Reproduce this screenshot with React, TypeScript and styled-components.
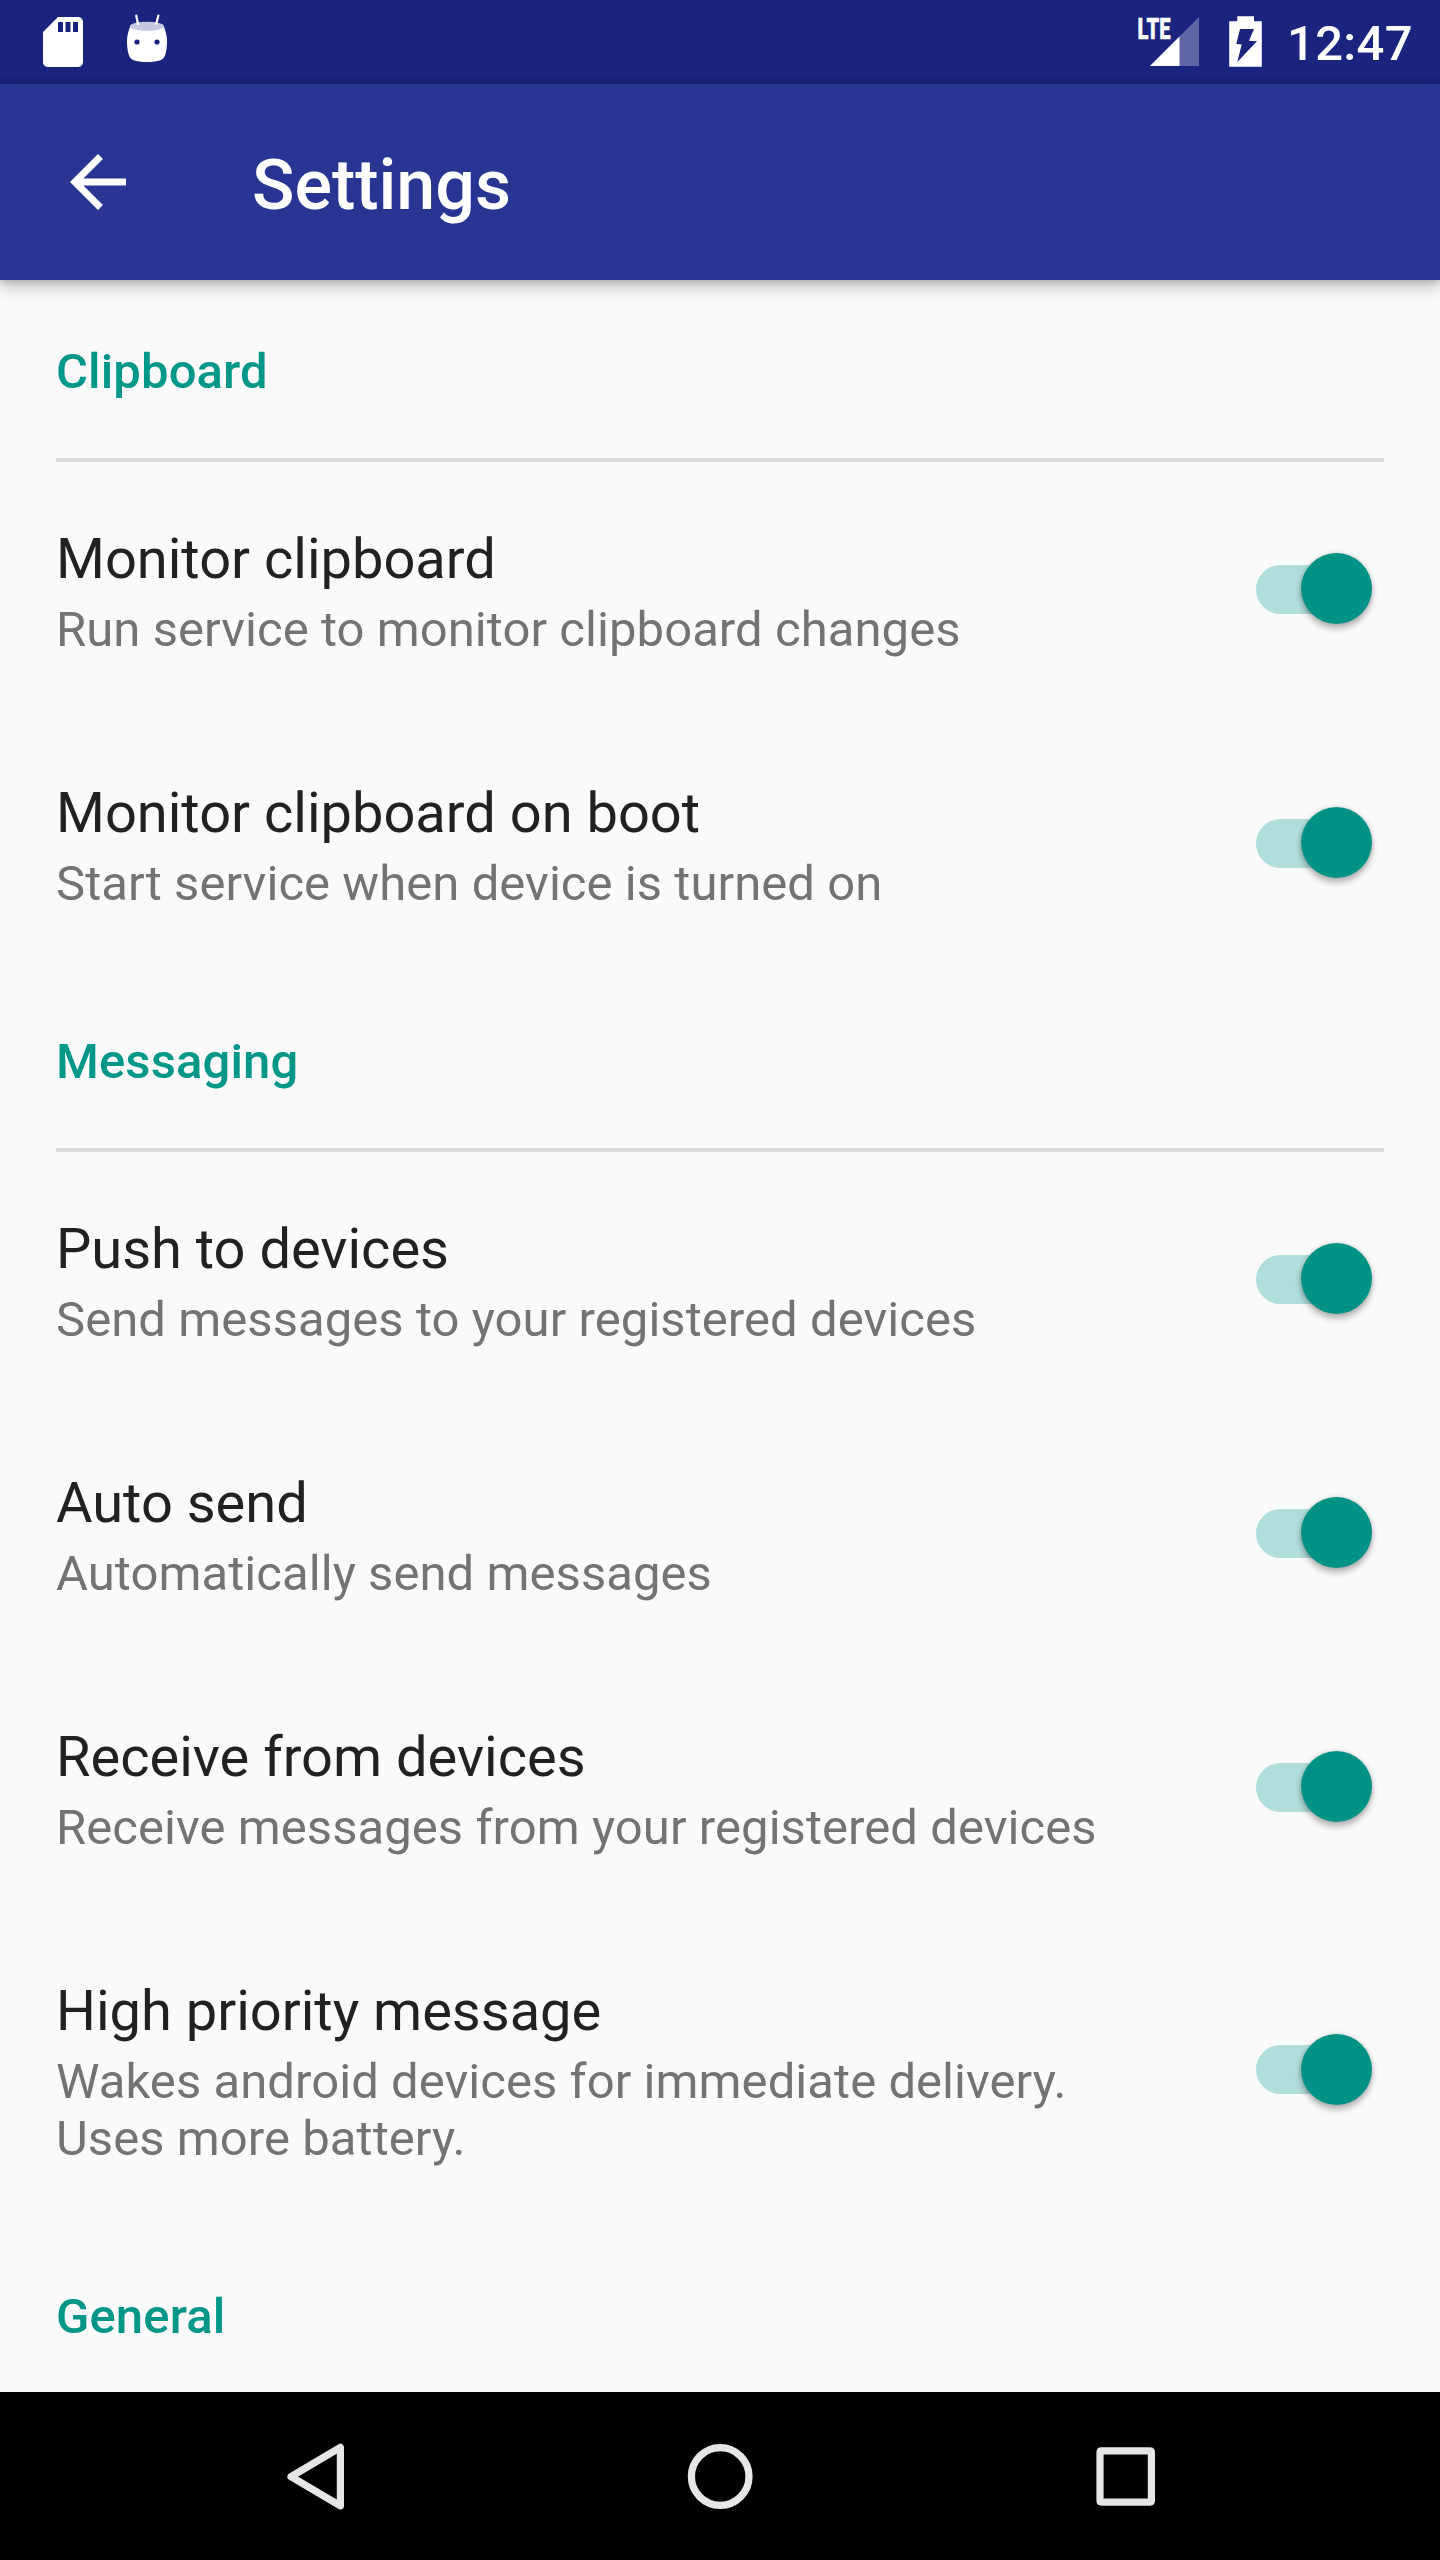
import React from "react";
import styled, { createGlobalStyle } from "styled-components";

const GlobalStyle = createGlobalStyle`
  *, *::before, *::after { box-sizing: border-box; }
  html, body { margin: 0; padding: 0; background: #fafafa; }
  body { font-family: Roboto, "Noto Sans", sans-serif; -webkit-font-smoothing: antialiased; }
`;

const Screen = styled.div`
  width: 1440px;
  height: 2560px;
  display: flex;
  flex-direction: column;
  overflow: hidden;
  background: #fafafa;
`;

const StatusBar = styled.div`
  flex: none;
  height: 84px;
  display: flex;
  justify-content: space-between;
  background: #1a237e;
`;

const StatusGroup = styled.div`
  display: flex;
  height: 84px;
`;

const StatusIcon = styled.svg`
  display: block;
  flex: none;
`;

const Clock = styled.div`
  width: 157px;
  padding: 15px 0 0 4px;
  line-height: 57px;
  font-size: 49px;
  font-weight: 500;
  letter-spacing: 0.3px;
  color: #fff;
  white-space: nowrap;
`;

const Toolbar = styled.header`
  flex: none;
  position: relative;
  z-index: 1;
  height: 196px;
  display: flex;
  align-items: center;
  padding-left: 56px;
  background: #283593;
  box-shadow: 0 0 7px rgba(0, 0, 0, 0.2), 0 7px 14px rgba(0, 0, 0, 0.24);
`;

const BackButton = styled.button`
  width: 84px;
  height: 84px;
  margin: 0 112px 0 0;
  padding: 0;
  border: 0;
  background: none;
  svg { display: block; }
`;

const Title = styled.h1`
  margin: 6px 0 0;
  font-size: 70px;
  line-height: 82px;
  font-weight: 500;
  color: #fff;
`;

const Content = styled.main`
  flex: 1;
  min-height: 0;
  overflow: hidden;
`;

const SectionHeader = styled.h2`
  margin: 0 56px;
  padding: 63px 0 58px;
  border-bottom: 4px solid #dbdbdb;
  font-size: 49px;
  line-height: 57px;
  font-weight: 500;
  letter-spacing: 0.12px;
  color: #009688;
`;

const Row = styled.div`
  display: flex;
  align-items: center;
  justify-content: space-between;
  padding: 64px 68px 58px 56px;
`;

const RowText = styled.div`
  display: flex;
  flex-direction: column;
  gap: 9px;
`;

const RowTitle = styled.div`
  font-size: 56px;
  line-height: 66px;
  color: #212121;
  white-space: nowrap;
`;

const RowSummary = styled.div`
  font-size: 49px;
  line-height: 57px;
  letter-spacing: 0.06px;
  color: #737373;
  white-space: pre-line;
`;

const Track = styled.div`
  width: 116px;
  height: 49px;
  margin-top: -6px;
  display: flex;
  align-items: center;
  justify-content: flex-end;
  border-radius: 25px;
  background: linear-gradient(to right, #b0deda 80px, transparent 80px);
`;

const Thumb = styled.div`
  flex: none;
  width: 71px;
  height: 71px;
  margin-bottom: 1px;
  border-radius: 50%;
  background: #009385;
  box-shadow: 0 0 5px rgba(0, 0, 0, 0.16), 0 5px 6px rgba(0, 0, 0, 0.25);
`;

const NavBar = styled.nav`
  flex: none;
  height: 168px;
  display: flex;
  justify-content: center;
  background: #000;
`;

const NavButton = styled.button`
  width: 405px;
  height: 168px;
  display: flex;
  align-items: center;
  justify-content: center;
  padding: 0;
  border: 0;
  background: none;
`;

const sections = [
  {
    name: "Clipboard",
    items: [
      ["Monitor clipboard", "Run service to monitor clipboard changes"],
      ["Monitor clipboard on boot", "Start service when device is turned on"],
    ],
  },
  {
    name: "Messaging",
    items: [
      ["Push to devices", "Send messages to your registered devices"],
      ["Auto send", "Automatically send messages"],
      ["Receive from devices", "Receive messages from your registered devices"],
      ["High priority message", "Wakes android devices for immediate delivery.\nUses more battery."],
    ],
  },
  { name: "General", items: [] },
];

export default function App() {
  return (
    <Screen>
      <GlobalStyle />
      <StatusBar>
        <StatusGroup>
          <StatusIcon width="105" height="84" viewBox="0 0 105 84">
            <path
              transform="translate(33 12) scale(2.5)"
              fill="#fff"
              d="M18 2h-8L4.02 8 4 20c0 1.1.9 2 2 2h12c1.1 0 2-.9 2-2V4c0-1.1-.9-2-2-2zm-6 6h-2V4h2v4zm3 0h-2V4h2v4zm3 0h-2V4h2v4z"
            />
          </StatusIcon>
          <StatusIcon width="84" height="84" viewBox="105 0 84 84">
            <path
              fill="#fff"
              d="M130 27C127.6 33 127 37 127 42C127 48 128 54 130 57.5C132 60.5 138 62 147 62C156 62 162 60.5 164 57.5C166 54 167 48 167 42C167 37 166.4 33 164 27Z"
            />
            <ellipse cx="147" cy="26.3" rx="17" ry="4.6" fill="#c6c8df" />
            <path d="M136.2 15.5L138 24M158.4 15.5L156.2 24" stroke="#fff" strokeWidth="2.2" strokeLinecap="round" />
            <circle cx="137" cy="42" r="2.6" fill="#1a237e" />
            <circle cx="157" cy="42" r="2.6" fill="#1a237e" />
          </StatusIcon>
        </StatusGroup>
        <StatusGroup>
          <StatusIcon width="77" height="84" viewBox="1130 0 77 84">
            <path d="M1150 66L1199 17V66Z" fill="#fff" fillOpacity="0.3" />
            <path d="M1150 66L1179.5 36.5V66Z" fill="#fff" />
            <text
              x="1137.5"
              y="39"
              fill="#fff"
              stroke="#fff"
              strokeWidth="0.4"
              fontFamily="Roboto, sans-serif"
              fontWeight="900"
              fontSize="29.5"
              textLength="33"
              lengthAdjust="spacingAndGlyphs"
            >
              LTE
            </text>
          </StatusIcon>
          <StatusIcon width="76" height="84" viewBox="1207 0 76 84">
            <path
              fill="#fff"
              fillRule="evenodd"
              d="M1237.3 16.2H1254V21.2H1261.8V66.7H1229.2V21.2H1237.3ZM1240 29L1236.3 44L1241.7 44.4L1237.3 62L1257 41.3L1249 40.7L1254 29Z"
            />
          </StatusIcon>
          <Clock>12:47</Clock>
        </StatusGroup>
      </StatusBar>
      <Toolbar>
        <BackButton aria-label="Back">
          <svg width="84" height="84" viewBox="0 0 24 24">
            <path fill="#fff" d="M20 11H7.83l5.59-5.59L12 4l-8 8 8 8 1.41-1.41L7.83 13H20v-2z" />
          </svg>
        </BackButton>
        <Title>Settings</Title>
      </Toolbar>
      <Content>
        {sections.map((section) => (
          <section key={section.name}>
            <SectionHeader>{section.name}</SectionHeader>
            {section.items.map(([title, summary]) => (
              <Row key={title}>
                <RowText>
                  <RowTitle>{title}</RowTitle>
                  <RowSummary>{summary}</RowSummary>
                </RowText>
                <Track role="switch" aria-checked="true">
                  <Thumb />
                </Track>
              </Row>
            ))}
          </section>
        ))}
      </Content>
      <NavBar>
        <NavButton aria-label="Back">
          <svg width="84" height="84" viewBox="273 2434 84 84">
            <path
              d="M291 2476.6L340.4 2447.4V2505.8Z"
              fill="none"
              stroke="#e6e6e6"
              strokeWidth="7.2"
              strokeLinejoin="round"
            />
          </svg>
        </NavButton>
        <NavButton aria-label="Home">
          <svg width="84" height="84" viewBox="678 2434 84 84">
            <circle cx="720.2" cy="2476.5" r="28.8" fill="none" stroke="#e6e6e6" strokeWidth="7.3" />
          </svg>
        </NavButton>
        <NavButton aria-label="Recents">
          <svg width="84" height="84" viewBox="1083 2434 84 84">
            <path
              fill="#e6e6e6"
              fillRule="evenodd"
              d="M1101.4 2447.3H1149.8Q1155 2447.3 1155 2452.5V2500.5Q1155 2505.7 1149.8 2505.7H1101.6Q1096.4 2505.7 1096.4 2500.5V2452.5Q1096.4 2447.3 1101.4 2447.3ZM1103.6 2454.5V2498.4H1147.8V2454.5Z"
            />
          </svg>
        </NavButton>
      </NavBar>
    </Screen>
  );
}
